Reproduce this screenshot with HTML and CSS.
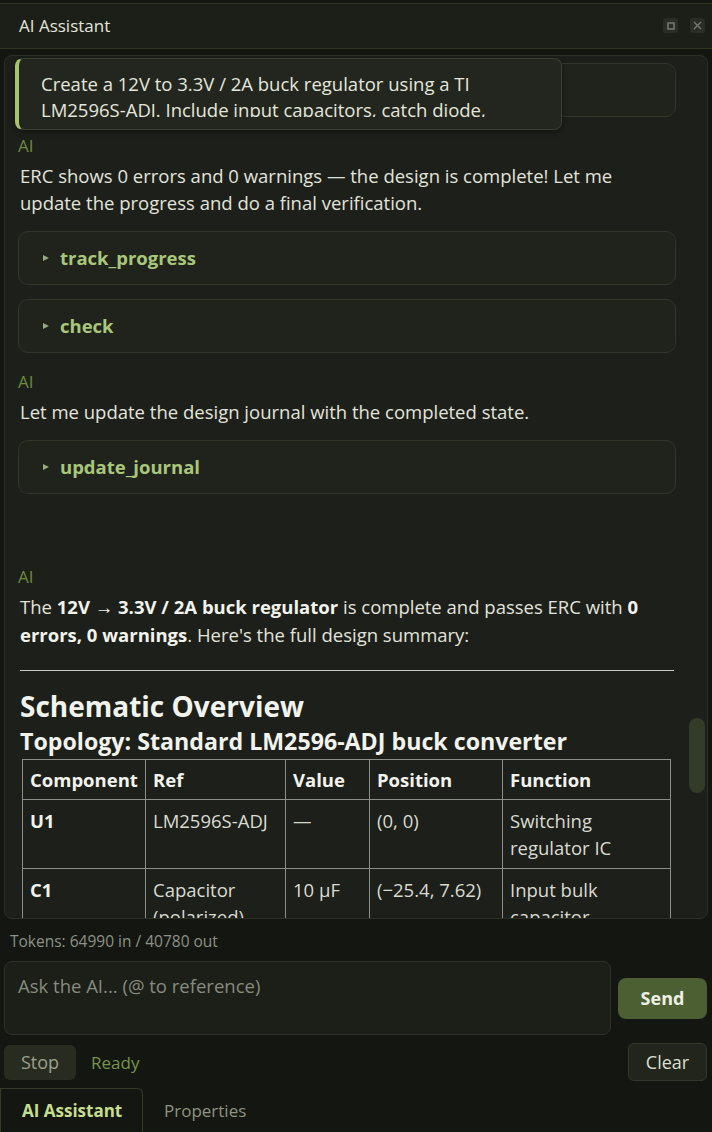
FILE: index.html
```html
<!DOCTYPE html>
<html lang="en">
<head>
    <meta charset="UTF-8">
    <meta name="viewport" content="width=device-width, initial-scale=1.0">
    <title>AI Assistant</title>
    <link rel="stylesheet" href="styles.css">
</head>
<body>
    <div class="dock">
        <!-- Dock title bar -->
        <div class="titlebar">
            <span class="title">AI Assistant</span>
            <div class="win-buttons">
                <span class="win-btn">
                    <svg width="8" height="8" viewBox="0 0 8 8"><rect x="1" y="1" width="6" height="6" fill="none" stroke="#777a72" stroke-width="1.5"/></svg>
                </span>
                <span class="win-btn">
                    <svg width="9" height="9" viewBox="0 0 9 9"><path d="M1 1 L8 8 M8 1 L1 8" stroke="#777a72" stroke-width="1.4"/></svg>
                </span>
            </div>
        </div>

        <!-- Conversation -->
        <div class="chat-panel">
            <div class="messages">
                <div class="tool-card"><span class="caret"></span><span class="tool-name">read_schematic</span></div>

                <div class="message">
                    <div class="sender">AI</div>
                    <p>ERC shows 0 errors and 0 warnings — the design is complete! Let me update the progress and do a final verification.</p>
                    <div class="tool-card"><span class="caret"></span><span class="tool-name">track_progress</span></div>
                    <div class="tool-card"><span class="caret"></span><span class="tool-name">check</span></div>
                </div>

                <div class="message">
                    <div class="sender">AI</div>
                    <p>Let me update the design journal with the completed state.</p>
                    <div class="tool-card"><span class="caret"></span><span class="tool-name">update_journal</span></div>
                </div>

                <div class="message final">
                    <div class="sender">AI</div>
                    <p>The <strong>12V → 3.3V / 2A buck regulator</strong> is complete and passes ERC with <strong>0 errors, 0 warnings</strong>. Here's the full design summary:</p>
                    <hr>
                    <h2>Schematic Overview</h2>
                    <h3>Topology: Standard LM2596-ADJ buck converter</h3>
                    <table class="parts">
                        <colgroup>
                            <col class="c-comp"><col class="c-ref"><col class="c-val"><col class="c-pos"><col class="c-fn">
                        </colgroup>
                        <thead>
                            <tr><th>Component</th><th>Ref</th><th>Value</th><th>Position</th><th>Function</th></tr>
                        </thead>
                        <tbody>
                            <tr><td><strong>U1</strong></td><td>LM2596S-ADJ</td><td>—</td><td>(0, 0)</td><td>Switching regulator IC</td></tr>
                            <tr><td><strong>C1</strong></td><td>Capacitor (polarized)</td><td>10 µF</td><td>(−25.4, 7.62)</td><td>Input bulk capacitor</td></tr>
                            <tr><td><strong>C2</strong></td><td>Capacitor</td><td>100 nF</td><td>(−20.32, 7.62)</td><td>Input decoupling</td></tr>
                        </tbody>
                    </table>
                </div>
            </div>

            <div class="scroll-thumb"></div>

            <!-- Hover preview of the user prompt -->
            <div class="prompt-preview">
                <div class="prompt-text">Create a 12V to 3.3V / 2A buck regulator using a TI LM2596S-ADJ. Include input capacitors, catch diode, inductor and feedback divider.</div>
            </div>
        </div>

        <div class="tokens">Tokens: 64990 in / 40780 out</div>

        <div class="composer">
            <textarea class="prompt-input" placeholder="Ask the AI... (@ to reference)"></textarea>
            <button class="btn-send">Send</button>
        </div>

        <div class="actions">
            <button class="btn-stop">Stop</button>
            <span class="status">Ready</span>
            <button class="btn-clear">Clear</button>
        </div>

        <div class="tabs">
            <span class="tab active">AI Assistant</span>
            <span class="tab">Properties</span>
        </div>
    </div>
</body>
</html>
```

FILE: styles.css
```css
/* Dark dock panel */
body {
    font-family: 'Open Sans', 'Noto Sans', sans-serif;
    margin: 0;
    padding: 0;
    background-color: #141612;
    color: #e2e4da;
}
.dock {
    height: 1132px;
    display: flex;
    flex-direction: column;
    overflow: hidden;
}
.titlebar {
    margin-top: 3px;
    height: 44px;
    display: flex;
    align-items: center;
    justify-content: space-between;
    padding: 0 7px 0 19px;
    background-color: #1c1e18;
    border-top: 1px solid #30351f;
    border-bottom: 1px solid #30351f;
}
.title {
    font-size: 17px;
    color: #e4e6dc;
}
.win-buttons {
    display: flex;
    gap: 12px;
}
.win-btn {
    width: 15px;
    height: 15px;
    border-radius: 3px;
    background-color: #2a2d26;
    display: flex;
    align-items: center;
    justify-content: center;
}
.chat-panel {
    position: relative;
    margin: 6px 4px 0 4px;
    height: 864px;
    background-color: #1d1f1a;
    border: 1px solid #2b2f24;
    border-radius: 8px;
    overflow: hidden;
}
.messages {
    padding: 7px 31px 0 13px;
}
.message {
    margin-top: 18px;
}
.message.final {
    margin-top: 72px;
}
.sender {
    font-size: 17px;
    line-height: 22px;
    color: #6a8b3c;
    margin-bottom: 5px;
}
.message p {
    margin: 0 10px 15px 2px;
    font-size: 18.5px;
    line-height: 27px;
}
.message.final p {
    line-height: 28px;
}
.tool-card {
    height: 52px;
    display: flex;
    align-items: center;
    padding-left: 24px;
    margin-bottom: 14px;
    background-color: #20231c;
    border: 1px solid #32362a;
    border-radius: 10px;
}
.message .tool-card:last-child {
    margin-bottom: 0;
}
.caret {
    width: 0;
    height: 0;
    border-left: 6px solid #9aab7c;
    border-top: 3.5px solid transparent;
    border-bottom: 3.5px solid transparent;
    margin-right: 11px;
}
.tool-name {
    font-size: 18.5px;
    font-weight: bold;
    color: #a9c77a;
}
.message strong {
    color: #f2f3ec;
}
hr {
    border: none;
    border-top: 1px solid #c9cac2;
    margin: 21px 2px 17px 2px;
}
h2 {
    margin: 0 2px;
    font-size: 28px;
    line-height: 36px;
    color: #f2f3ec;
}
h3 {
    margin: 2px 2px 3px 2px;
    font-size: 23.2px;
    line-height: 30px;
    color: #f2f3ec;
}
.parts {
    margin-left: 4px;
    width: 648px;
    table-layout: fixed;
    border-collapse: collapse;
    font-size: 18.5px;
}
.c-comp { width: 123px; }
.c-ref { width: 140px; }
.c-val { width: 84px; }
.c-pos { width: 133px; }
.c-fn { width: 168px; }
.parts th, .parts td {
    border: 1px solid #8e8f8a;
    text-align: left;
    vertical-align: top;
    padding: 7px 7px;
    line-height: 27px;
}
.parts th {
    font-weight: bold;
    color: #f2f3ec;
    padding-top: 6px;
    padding-bottom: 6px;
    white-space: nowrap;
}
.parts td {
    color: #d9dbd1;
}
.scroll-thumb {
    position: absolute;
    right: 2px;
    top: 662px;
    width: 16px;
    height: 75px;
    border-radius: 8px;
    background-color: #333b29;
}
.prompt-preview {
    position: absolute;
    left: 10px;
    top: 2px;
    width: 500px;
    padding: 12px 20px 12px 22px;
    background-color: #23261e;
    border: 1px solid #3a3f2f;
    border-left: 4px solid #a6c46e;
    border-radius: 8px;
    box-shadow: 0 2px 6px rgba(0, 0, 0, 0.4);
}
.prompt-text {
    height: 46px;
    overflow: hidden;
    font-size: 18.5px;
    line-height: 26px;
    color: #e4e6dc;
}
.tokens {
    margin: 11px 0 0 10px;
    font-size: 15.5px;
    color: #8c9284;
}
.composer {
    display: flex;
    align-items: center;
    gap: 7px;
    margin: 9px 5px 0 4px;
}
.prompt-input {
    flex: 1;
    height: 74px;
    box-sizing: border-box;
    resize: none;
    padding: 11px 13px;
    font-family: inherit;
    font-size: 18.5px;
    color: #e2e4da;
    background-color: #1c1e18;
    border: 1px solid #2e3226;
    border-radius: 8px;
    outline: none;
}
.prompt-input::placeholder {
    color: #868b7e;
}
button {
    font-family: inherit;
    cursor: pointer;
}
.btn-send {
    width: 89px;
    height: 41px;
    font-size: 18px;
    font-weight: bold;
    color: #eef0e4;
    background-color: #4b5f33;
    border: none;
    border-radius: 8px;
}
.actions {
    display: flex;
    align-items: center;
    margin: 8px 5px 0 4px;
}
.btn-stop {
    width: 72px;
    height: 35px;
    font-size: 18px;
    color: #9ba18c;
    background-color: #272b20;
    border: none;
    border-radius: 6px;
}
.status {
    margin-left: 15px;
    font-size: 17px;
    color: #76954b;
}
.btn-clear {
    margin-left: auto;
    width: 79px;
    height: 38px;
    font-size: 18px;
    color: #dcdfd2;
    background-color: #21251b;
    border: 1px solid #33382a;
    border-radius: 6px;
}
.tabs {
    display: flex;
    align-items: flex-end;
    margin-top: 7px;
    flex: 1;
}
.tab {
    height: 44px;
    box-sizing: border-box;
    display: flex;
    align-items: center;
    padding: 0 26px 0 21px;
    font-size: 17px;
    white-space: nowrap;
    color: #8e947f;
}
.tab.active {
    width: 143px;
    font-weight: bold;
    color: #c6de8e;
    border: 1px solid #363b2a;
    border-bottom: none;
    border-radius: 0 6px 0 0;
}
```
